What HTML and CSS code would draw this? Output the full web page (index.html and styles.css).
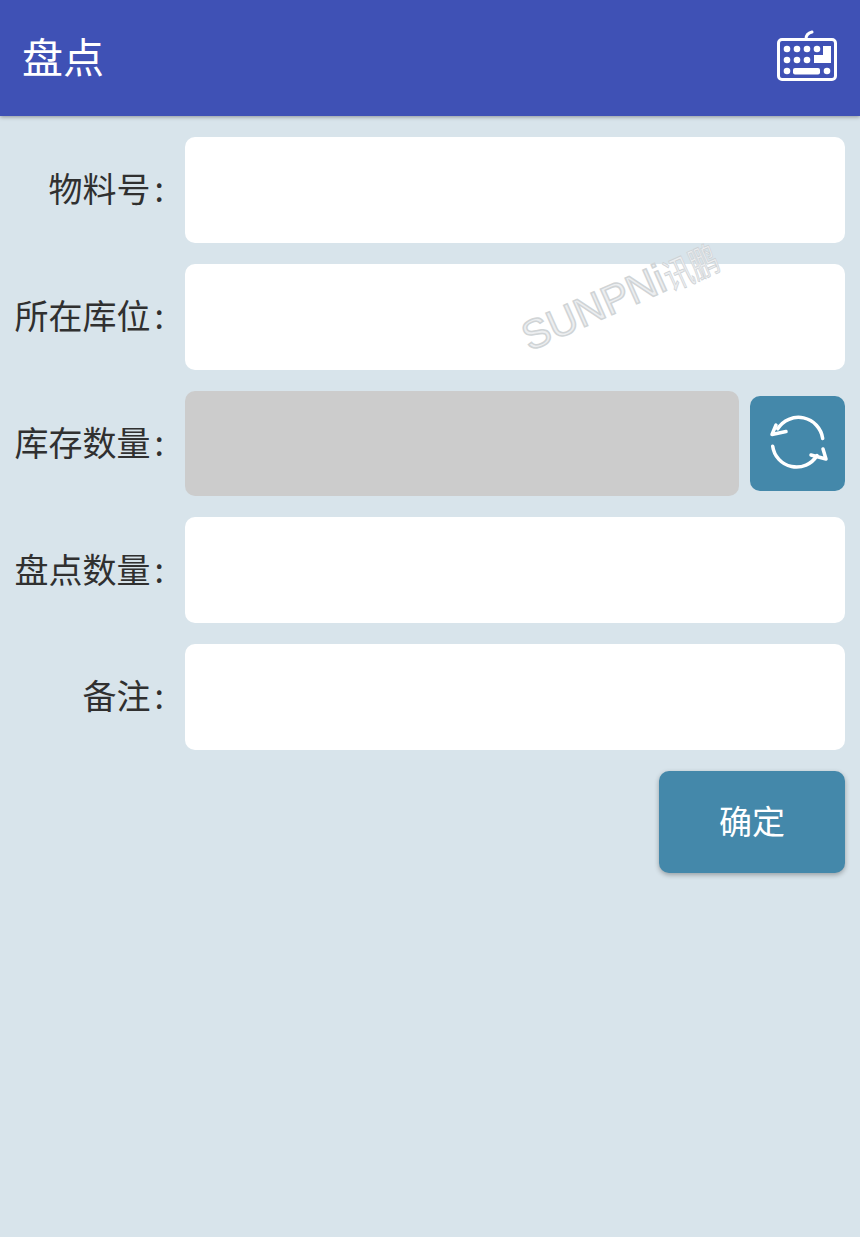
FILE: index.html
```html
<!DOCTYPE html>
<html lang="zh-CN">

<head>
    <meta charset="UTF-8">
    <title>盘点</title>
    <link rel="stylesheet" href="styles.css">
</head>

<body>
    <header class="topbar">
        <h1>盘点</h1>
        <svg class="keyboard-icon" viewBox="0 0 60 54" width="60" height="54" aria-hidden="true">
            <path class="outline" d="M29 9c0-4 2-6 6-7" />
            <rect class="outline" x="1.5" y="9.5" width="57" height="40" rx="3.5" />
            <g class="keys">
                <circle cx="10" cy="19" r="3.3" /><circle cx="20" cy="19" r="3.3" /><circle cx="30" cy="19" r="3.3" /><circle cx="40" cy="19" r="3.3" />
                <circle cx="10" cy="30" r="3.3" /><circle cx="20" cy="30" r="3.3" /><circle cx="30" cy="30" r="3.3" />
                <path d="M46 16h8v17H37v-8h9z" />
                <circle cx="10" cy="41" r="3.3" /><rect x="16" y="38" width="27" height="6.5" rx="2" /><circle cx="50" cy="41" r="3.3" />
            </g>
        </svg>
    </header>

    <main class="form">
        <div class="row">
            <label>物料号<span class="colon">:</span></label>
            <div class="field"></div>
        </div>
        <div class="row">
            <label>所在库位<span class="colon">:</span></label>
            <div class="field"></div>
        </div>
        <div class="row">
            <label>库存数量<span class="colon">:</span></label>
            <div class="field disabled"></div>
            <button class="refresh" aria-label="刷新">
                <svg viewBox="0 0 60 56" width="60" height="56" aria-hidden="true">
                    <path d="M54.7 23.5A24.5 24.5 0 0 0 9.7 13.8" />
                    <path d="M8 10L4 19.5L18 16.5" />
                    <path d="M4.7 31.2A24 24 0 0 0 49 40.5" />
                    <path d="M55 34L58 44L43 40" />
                </svg>
            </button>
        </div>
        <div class="row">
            <label>盘点数量<span class="colon">:</span></label>
            <div class="field"></div>
        </div>
        <div class="row">
            <label>备注<span class="colon">:</span></label>
            <div class="field"></div>
        </div>
        <div class="actions">
            <button class="confirm">确定</button>
        </div>
    </main>

    <div class="watermark">SUNPNi<span class="watermark-cn">讯鹏</span></div>
</body>

</html>
```

FILE: styles.css
```css
body {
    background-color: rgb(216, 228, 235);
    margin: 0;
    font-family: "Noto Sans CJK SC", "Noto Sans", sans-serif;
    height: 1237px;
    overflow: hidden;
    position: relative;
}

.topbar {
    height: 116px;
    background-color: rgb(63, 81, 181);
    box-shadow: 0 1px 4px rgba(0, 0, 0, .35);
    display: flex;
    align-items: center;
    justify-content: space-between;
    padding: 0 23px 0 22px;
    box-sizing: border-box;
}

.topbar h1 {
    margin: 0 0 5px;
    color: white;
    font-size: 41px;
    font-weight: 400;
    line-height: 1;
}

.keyboard-icon {
    margin-top: -2px;
}

.outline {
    fill: none;
    stroke: white;
    stroke-width: 3;
    stroke-linecap: round;
}

.keys {
    fill: white;
}

.form {
    padding: 21px 15px 0 0;
    display: flex;
    flex-direction: column;
    gap: 21px;
}

.row {
    display: flex;
    align-items: center;
    height: 105.75px;
}

.row label {
    width: 164px;
    flex: none;
    text-align: right;
    font-size: 34px;
    line-height: 1;
    padding-bottom: 3px;
    color: rgb(48, 48, 48);
}

.colon {
    margin-left: 4px;
}

.field {
    flex: 1;
    height: 100%;
    margin-left: 21px;
    background-color: white;
    border-radius: 10px;
}

.field.disabled {
    background-color: rgb(204, 204, 204);
}

.refresh {
    width: 95px;
    height: 95px;
    flex: none;
    margin-left: 11px;
    padding: 0;
    border: 0;
    border-radius: 10px;
    background-color: rgb(68, 136, 170);
    display: flex;
    align-items: center;
    justify-content: center;
}

.refresh svg {
    overflow: visible;
}

.refresh path {
    fill: none;
    stroke: white;
    stroke-width: 3.5;
    stroke-linecap: round;
    stroke-linejoin: round;
}

.actions {
    display: flex;
    justify-content: flex-end;
}

.confirm {
    width: 186px;
    height: 102px;
    padding: 0 0 3px;
    border: 0;
    border-radius: 10px;
    background-color: rgb(68, 136, 170);
    box-shadow: 0 2px 5px rgba(0, 0, 0, .3);
    color: white;
    font-family: inherit;
    font-size: 33px;
}

.watermark {
    position: absolute;
    left: 515px;
    top: 276px;
    transform: rotate(-24deg);
    font-family: "Liberation Sans", "Noto Sans CJK SC", sans-serif;
    font-size: 41px;
    line-height: 1;
    white-space: nowrap;
    color: rgb(236, 238, 240);
    -webkit-text-stroke: 1.5px rgb(208, 212, 214);
}

.watermark-cn {
    display: inline-block;
    font-size: 28px;
    margin-left: 1px;
    transform: scaleY(1.3);
    -webkit-text-stroke: .6px rgb(205, 209, 212);
}
```
